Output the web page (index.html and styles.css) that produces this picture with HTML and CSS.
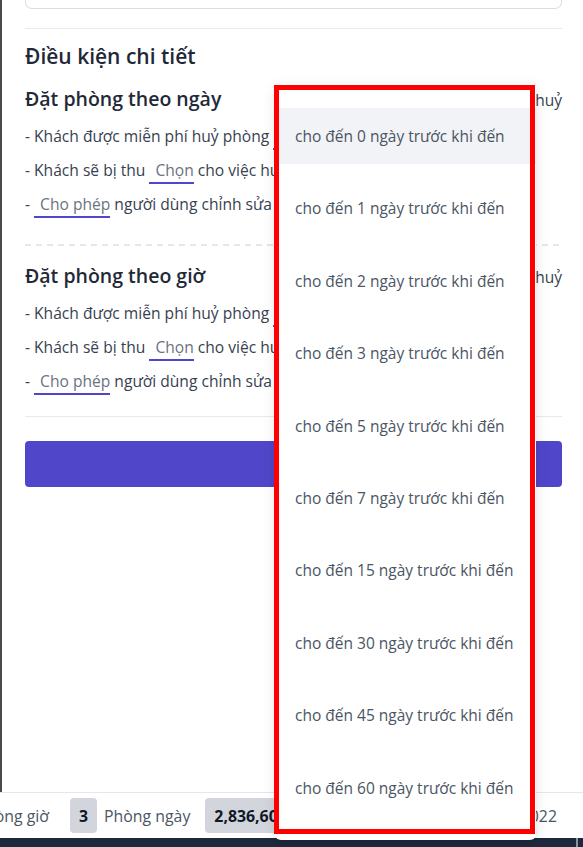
FILE: index.html
```html
<!DOCTYPE html>
<html lang="vi">
<head>
<meta charset="utf-8">
<title>Điều kiện chi tiết</title>
<link rel="stylesheet" href="styles.css">
</head>
<body>
<div class="frame">
  <main class="content">
    <div class="card-tail"></div>
    <hr class="rule">
    <h2 class="title">Điều kiện chi tiết</h2>

    <section class="policy">
      <div class="policy-head">
        <h3>Đặt phòng theo ngày</h3>
        <span class="policy-note">Cho phép huỷ</span>
      </div>
      <p class="line">- Khách được miễn phí huỷ phòng <span class="select">cho đến 0 ngày trước khi đến</span></p>
      <p class="line">- Khách sẽ bị thu <span class="select">Chọn</span> cho việc huỷ phòng</p>
      <p class="line">- <span class="select">Cho phép</span> người dùng chỉnh sửa đặt phòng</p>
    </section>

    <hr class="dash">

    <section class="policy">
      <div class="policy-head">
        <h3>Đặt phòng theo giờ</h3>
        <span class="policy-note">Cho phép huỷ</span>
      </div>
      <p class="line">- Khách được miễn phí huỷ phòng <span class="select">cho đến 0 giờ trước khi đến</span></p>
      <p class="line">- Khách sẽ bị thu <span class="select">Chọn</span> cho việc huỷ phòng</p>
      <p class="line">- <span class="select">Cho phép</span> người dùng chỉnh sửa đặt phòng</p>
    </section>

    <hr class="rule rule-bottom">
    <button class="save" type="button">Lưu</button>
  </main>

  <footer class="footer">
    <div class="footer-track">
      <span class="f-label">Phòng giờ</span>
      <span class="badge">3</span>
      <span class="f-label">Phòng ngày</span>
      <span class="badge">2,836,600</span>
      <span class="f-spacer"></span>
      <span class="f-label">Cập nhật 12/2022</span>
    </div>
  </footer>
  <div class="dock"><span class="dock-mark"></span></div>

  <ul class="dropdown">
    <li class="opt active">cho đến 0 ngày trước khi đến</li>
    <li class="opt">cho đến 1 ngày trước khi đến</li>
    <li class="opt">cho đến 2 ngày trước khi đến</li>
    <li class="opt">cho đến 3 ngày trước khi đến</li>
    <li class="opt">cho đến 5 ngày trước khi đến</li>
    <li class="opt">cho đến 7 ngày trước khi đến</li>
    <li class="opt">cho đến 15 ngày trước khi đến</li>
    <li class="opt">cho đến 30 ngày trước khi đến</li>
    <li class="opt">cho đến 45 ngày trước khi đến</li>
    <li class="opt">cho đến 60 ngày trước khi đến</li>
  </ul>
  <div class="highlight-box"></div>
</div>
</body>
</html>
```

FILE: styles.css
```css
* { box-sizing: border-box; }
html, body { margin: 0; padding: 0; }
body {
  width: 583px;
  height: 847px;
  overflow: hidden;
  background: #ffffff;
  font-family: "Open Sans", "Noto Sans", sans-serif;
  color: #1f2937;
}
.frame {
  position: relative;
  width: 583px;
  height: 847px;
  display: flex;
  flex-direction: column;
}
.content {
  flex: 1;
  border-left: 2px solid #4a4a4a;
  padding: 0 21px 0 23px;
}
.card-tail {
  height: 9px;
  border: 1px solid #d9dee6;
  border-top: none;
  border-radius: 0 0 7px 7px;
}
.rule {
  border: none;
  border-top: 1px solid #e5e9f0;
  margin: 19px 0 0;
}
.title {
  margin: 13px 0 0;
  font-size: 21px;
  line-height: 28px;
  font-weight: 600;
  color: #1f2937;
}
.policy-head {
  display: flex;
  justify-content: space-between;
  align-items: baseline;
  margin-top: 16px;
}
.policy-head h3 {
  margin: 0;
  font-size: 19.5px;
  line-height: 26px;
  font-weight: 600;
  color: #1f2937;
}
.policy-note {
  font-size: 15.5px;
  color: #374151;
}
.line {
  margin: 0;
  font-size: 15.6px;
  line-height: 34px;
  color: #374151;
}
.policy-head + .line { margin-top: 7px; }
.select {
  display: inline-block;
  line-height: 24px;
  padding: 0 0 0 6px;
  border-bottom: 2px solid #5046c9;
  color: #6b7280;
}
.dash {
  border: none;
  height: 2px;
  margin: 23px 0 0;
  background: repeating-linear-gradient(90deg, #e2e8f0 0 6px, transparent 6px 11px);
}
.policy + .dash + .policy .policy-head { margin-top: 17px; }
.rule-bottom { margin-top: 18px; }
.save {
  display: block;
  width: 100%;
  height: 46px;
  margin-top: 24px;
  border: none;
  border-radius: 4px;
  background: #5046c9;
  color: #ffffff;
  font-family: inherit;
  font-size: 16px;
}
.footer {
  height: 46px;
  border-top: 1px solid #e3e8ef;
  overflow: hidden;
  background: #ffffff;
}
.footer-track {
  display: flex;
  align-items: center;
  height: 45px;
  margin-left: -24.5px;
  margin-right: 26px;
  font-size: 15.85px;
  color: #4b5563;
}
.f-label { white-space: nowrap; }
.badge {
  display: inline-flex;
  align-items: center;
  height: 35px;
  padding: 0 9px;
  margin: 0 7px 0 21px;
  border-radius: 4px;
  background: #d2d6dc;
  color: #111827;
  font-weight: 700;
}
.f-label + .badge + .f-label + .badge { margin-left: 15px; }
.f-spacer { flex: 1; }
.dock {
  height: 9px;
  background: #1e293b;
  position: relative;
}
.dock-mark {
  position: absolute;
  left: 576px;
  top: 0;
  width: 2px;
  height: 9px;
  background: #8b93a0;
}
.dropdown {
  position: absolute;
  left: 275px;
  top: 83px;
  width: 261px;
  height: 757px;
  margin: 0;
  padding: 25px 0 24px;
  list-style: none;
  background: #ffffff;
  border-radius: 6px;
  box-shadow: 0 4px 14px rgba(0, 0, 0, 0.10), 0 0 3px rgba(0, 0, 0, 0.05);
  display: flex;
  flex-direction: column;
  gap: 16.4px;
}
.opt {
  height: 56px;
  flex: none;
  display: flex;
  align-items: center;
  padding: 0 20px;
  font-size: 15.5px;
  color: #4b5563;
  white-space: nowrap;
}
.opt.active { background: #f2f3f6; }
.highlight-box {
  position: absolute;
  left: 274px;
  top: 85px;
  width: 261px;
  height: 749px;
  border: 5px solid #ff0000;
  pointer-events: none;
}
```
